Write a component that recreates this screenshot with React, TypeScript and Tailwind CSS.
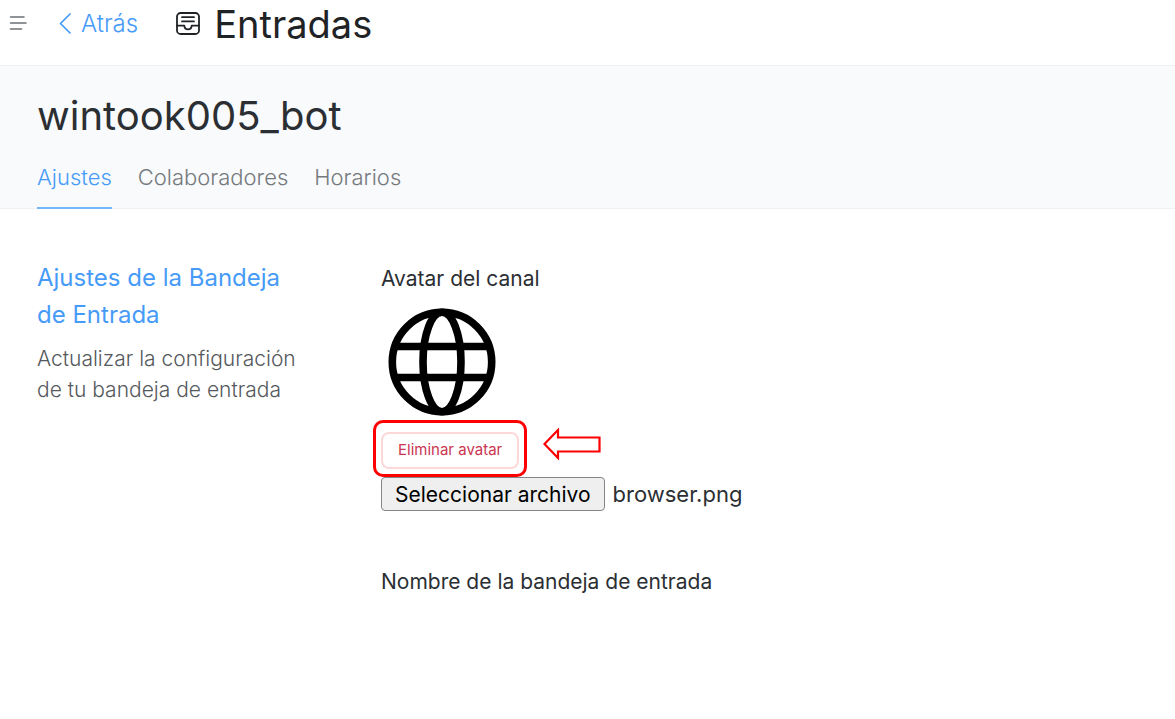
import React, { useRef, useState } from 'react';

const tabs = ['Ajustes', 'Colaboradores', 'Horarios'];

const MenuIcon = () => (
  <svg width="20" height="20" viewBox="0 0 20 20" fill="none" stroke="#6e7276" strokeWidth="1.6" strokeLinecap="round">
    <path d="M2.500 4h13.500M2.500 10h15.500M2.500 16h11" />
  </svg>
);

const BackIcon = () => (
  <svg width="12" height="22" viewBox="0 0 12 22" fill="none" stroke="#479bf8" strokeWidth="1.7" strokeLinecap="round" strokeLinejoin="round">
    <path d="M11 1 1.500 10.500 11 20" />
  </svg>
);

const InboxIcon = () => (
  <svg width="24" height="24" viewBox="0 0 24 24" fill="none" stroke="#1f2326" strokeWidth="1.8" strokeLinecap="round" strokeLinejoin="round">
    <rect x="1" y="1" width="22" height="21" rx="3.6" />
    <path d="M6 5.200h12M6 9.400h12M1 13.600h7.300c.2 2.400 1.700 3.800 3.700 3.800s3.500-1.400 3.700-3.800H23" />
  </svg>
);

const GlobeIcon = () => (
  <svg width="108" height="108" viewBox="0 0 108 108" fill="none" stroke="#000" strokeWidth="7.600">
    <circle cx="54" cy="54" r="49.700" />
    <ellipse cx="54" cy="54" rx="19" ry="49.700" />
    <path d="M8 38.500h92M8 69.500h92" />
  </svg>
);

const ArrowIcon = () => (
  <svg width="58" height="32" viewBox="0 0 58 32" fill="none" stroke="#fe0000" strokeWidth="2.200">
    <path d="M1.500 16 15 2v7.500h41.500v14H15V30z" />
  </svg>
);

const App: React.FC = () => {
  const [activeTab, setActiveTab] = useState('Ajustes');
  const [fileName, setFileName] = useState('browser.png');
  const fileInput = useRef<HTMLInputElement>(null);

  return (
    <div className="min-h-screen bg-white font-['Inter',sans-serif] text-[21px] text-[#2b2f33]">
      {/* Top bar */}
      <header className="flex h-[66px] items-start border-b border-[#eff1f4] pl-2">
        <button type="button" aria-label="Menú" className="mt-[13px]">
          <MenuIcon />
        </button>
        <a href="#" className="mt-2 ml-[31px] flex h-8 items-center gap-2.5 text-2xl font-light text-[#479bf8]">
          <BackIcon />
          Atrás
        </a>
        <h1 className="ml-[38px] flex h-12 items-center gap-3.5 text-[38px] font-normal text-[#1f2326]">
          <InboxIcon />
          Entradas
        </h1>
      </header>

      {/* Inbox title and tabs */}
      <section className="border-b border-[#eff1f4] bg-[#f8fafc] px-[37px] pt-7">
        <h2 className="text-[40px] leading-[44px]">wintook005_bot</h2>
        <nav className="mt-5 flex gap-[26px] text-[22px]">
          {tabs.map((tab) => (
            <a
              key={tab}
              href="#"
              onClick={() => setActiveTab(tab)}
              className={`-mb-px h-[51px] border-b-2 pt-1 leading-[30px] font-light ${activeTab === tab ? 'border-[#74b8fa] text-[#479bf8]' : 'border-transparent text-[#75797c]'}`}
            >
              {tab}
            </a>
          ))}
        </nav>
      </section>

      {/* Settings */}
      <main className="flex px-[37px] pt-[50px]">
        <div className="w-[270px] shrink-0">
          <h3 className="text-2xl leading-[37px] text-[#479bf8]">
            Ajustes de la Bandeja de Entrada
          </h3>
          <p className="mt-2.5 leading-[31px] font-light text-[#55595d]">
            Actualizar la configuración de tu bandeja de entrada
          </p>
        </div>

        <div className="ml-[74px] flex flex-col items-start">
          <p className="mt-[3px] leading-[34px]">Avatar del canal</p>
          <div className="mt-3 ml-[7px]">
            <GlobeIcon />
          </div>
          <div className="relative mt-4">
            <button type="button" className="h-[37px] rounded-lg border-2 border-[#fcd8d8] px-[15px] text-[15px] text-[#c9364f]">
              Eliminar avatar
            </button>
            {/* Highlight around the delete button */}
            <div className="pointer-events-none absolute -inset-x-2 -top-3 -bottom-2 rounded-[10px] border-[3px] border-[#fe0000]" />
            <div className="pointer-events-none absolute -top-1 left-full ml-6">
              <ArrowIcon />
            </div>
          </div>
          <div className="mt-2 flex items-center gap-2">
            <button
              type="button"
              onClick={() => fileInput.current?.click()}
              className="h-[34px] rounded-sm border border-[#858585] bg-[#efefef] px-[13px] pt-0.5 leading-[30px] text-black"
            >
              Seleccionar archivo
            </button>
            <input
              ref={fileInput}
              type="file"
              aria-label="Avatar del canal"
              className="hidden"
              onChange={(e) => setFileName(e.target.files?.[0]?.name || '')}
            />
            <span className="text-[22px]">{fileName}</span>
          </div>
          <p className="mt-[54px] leading-[34px]">Nombre de la bandeja de entrada</p>
        </div>
      </main>
    </div>
  );
};

export default App;
